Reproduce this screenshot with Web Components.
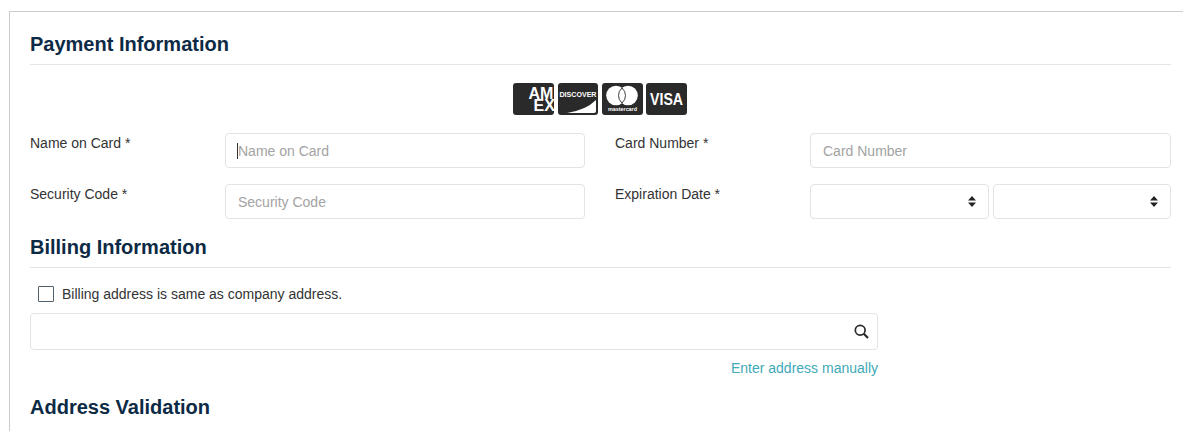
<!DOCTYPE html>
<html><head><meta charset="utf-8">
<style>
html,body{margin:0;padding:0;background:#fff;overflow:hidden;height:431px}
body{font-family:"Liberation Sans",Arial,sans-serif;font-size:14px;color:#333}
</style></head>
<body>
<pay-panel>
  <sec-head>Payment Information</sec-head>
  <card-logos></card-logos>
  <form-row>
    <form-field label="Name on Card *"><text-box placeholder="Name on Card" caret></text-box></form-field>
    <form-field label="Card Number *"><text-box placeholder="Card Number"></text-box></form-field>
  </form-row>
  <form-row class="last">
    <form-field label="Security Code *"><text-box placeholder="Security Code"></text-box></form-field>
    <form-field label="Expiration Date *"><select-pair></select-pair></form-field>
  </form-row>
  <sec-head class="billing">Billing Information</sec-head>
  <check-line>Billing address is same as company address.</check-line>
  <address-search></address-search>
  <sec-head class="validation">Address Validation</sec-head>
</pay-panel>
<script>
function def(name, html){
  customElements.define(name, class extends HTMLElement{
    connectedCallback(){
      if(this.shadowRoot) return;
      const r=this.attachShadow({mode:'open'});
      r.innerHTML = typeof html==='function'?html(this):html;
    }
  });
}
def('pay-panel',`<style>:host{display:block;margin:11px 0 0 9px;border-top:1px solid #ccc;border-left:1px solid #ccc;padding:18px 12px 0 20px;box-sizing:border-box;height:420px;overflow:hidden}</style><slot></slot>`);
def('sec-head',`<style>
:host{display:block;font-size:20px;font-weight:700;line-height:28px;color:#0d2a45;padding-bottom:6px;border-bottom:1px solid #e3e5e7}
:host(.validation){border-bottom:0}
</style><slot></slot>`);
def('card-logos',`<style>
:host{display:flex;justify-content:center;margin:18px 0 18px;height:32px;padding-right:1px}
svg{display:block;width:41px;height:32px;flex:none}
svg.d{width:40px;margin-left:4px}
svg.m{margin-left:4px}
svg.v{margin-left:3px}
text{font-family:"Liberation Sans",Arial,sans-serif;font-weight:700;fill:#fff}
</style>
<svg viewBox="0 0 41 32"><rect width="41" height="32" rx="3" fill="#2b2a2a"/>
<text transform="translate(15.5 15.5) scale(1 1.05)" font-size="16">AM</text>
<text transform="translate(20.5 28) scale(1 1.05)" font-size="16">EX</text></svg>
<svg class="d" viewBox="0 0 40 32"><rect width="40" height="32" rx="3" fill="#2b2a2a"/>
<path d="M9 30 Q28 27 38 17 V28 a2 2 0 0 1 -2 2z" fill="#fff"/>
<text x="1.5" y="14" font-size="6.6" textLength="37" lengthAdjust="spacingAndGlyphs">DISCOVER</text></svg>
<svg class="m" viewBox="0 0 41 32"><rect width="41" height="32" rx="3" fill="#2b2a2a"/>
<circle cx="14" cy="12.5" r="9.8" fill="#fff"/><circle cx="26" cy="12.5" r="9.8" fill="#fff"/>
<path d="M20 5a9.8 9.8 0 0 1 0 15a9.8 9.8 0 0 1 0-15z" fill="#fff" stroke="#2b2a2a" stroke-width=".9"/>
<text x="6" y="28" font-size="4.6" font-weight="400" textLength="29" lengthAdjust="spacingAndGlyphs">mastercard</text></svg>
<svg class="v" viewBox="0 0 41 32"><rect width="41" height="32" rx="3" fill="#2b2a2a"/>
<text transform="translate(4 21.5) scale(.86 1)" font-size="16.5">VISA</text></svg>`);
def('form-row',`<style>:host{display:grid;grid-template-columns:555px 556px;column-gap:30px;margin-bottom:16px}
:host(.last){margin-bottom:14px}</style><slot></slot>`);
def('form-field',el=>`<style>
:host{display:grid;grid-template-columns:195px 1fr}
label{font-size:14px;line-height:20px;color:#333}
</style><label>${el.getAttribute('label')}</label><slot></slot>`);
def('text-box',el=>`<style>
:host{display:block;height:35px;box-sizing:border-box;border:1px solid #e3e3e3;border-radius:4px;padding:0 12px;line-height:35px;font-size:14px;color:#a3a3a3;position:relative;background:#fff}
i{position:absolute;left:11px;top:9px;width:1px;height:16px;background:#333}
</style>${el.hasAttribute('caret')?'<i></i>':''}<span>${el.getAttribute('placeholder')}</span>`);
const arrows=`<svg width="8" height="11" viewBox="0 0 8 11"><path d="M4 0L8 4.4H0zM4 11L0 6.6H8z" fill="#222"/></svg>`;
def('select-pair',`<style>
:host{display:grid;grid-template-columns:179px 178px;column-gap:4px}
div{height:35px;box-sizing:border-box;border:1px solid #e3e3e3;border-radius:4px;display:flex;align-items:center;justify-content:flex-end;padding-right:12px}
</style><div role="combobox">${arrows}</div><div role="combobox">${arrows}</div>`);
def('check-line',`<style>
:host{display:flex;align-items:center;gap:8px;margin:16px 0 9px 8px;height:20px;font-size:14px;color:#333}
i{display:block;width:14px;height:14px;border:1px solid #4f5f6d;border-radius:1px}
</style><i></i><slot></slot>`);
def('address-search',`<style>
:host{display:block;width:848px}
.box{height:37px;box-sizing:border-box;border:1px solid #e3e3e3;border-radius:4px;display:flex;align-items:center;justify-content:flex-end;padding-right:8px}
a{display:block;text-align:right;color:#41a9b8;line-height:20px;margin-top:8px;margin-bottom:15px;font-size:14px}
</style><div class="box"><svg width="15" height="15" viewBox="0 0 15 15" fill="none" stroke="#2a2a2a" stroke-width="1.7"><circle cx="6.2" cy="6.2" r="4.9"/><path d="M9.8 9.8L14 14" stroke-width="2.2"/></svg></div><a>Enter address manually</a>`);
</script>
</body></html>
